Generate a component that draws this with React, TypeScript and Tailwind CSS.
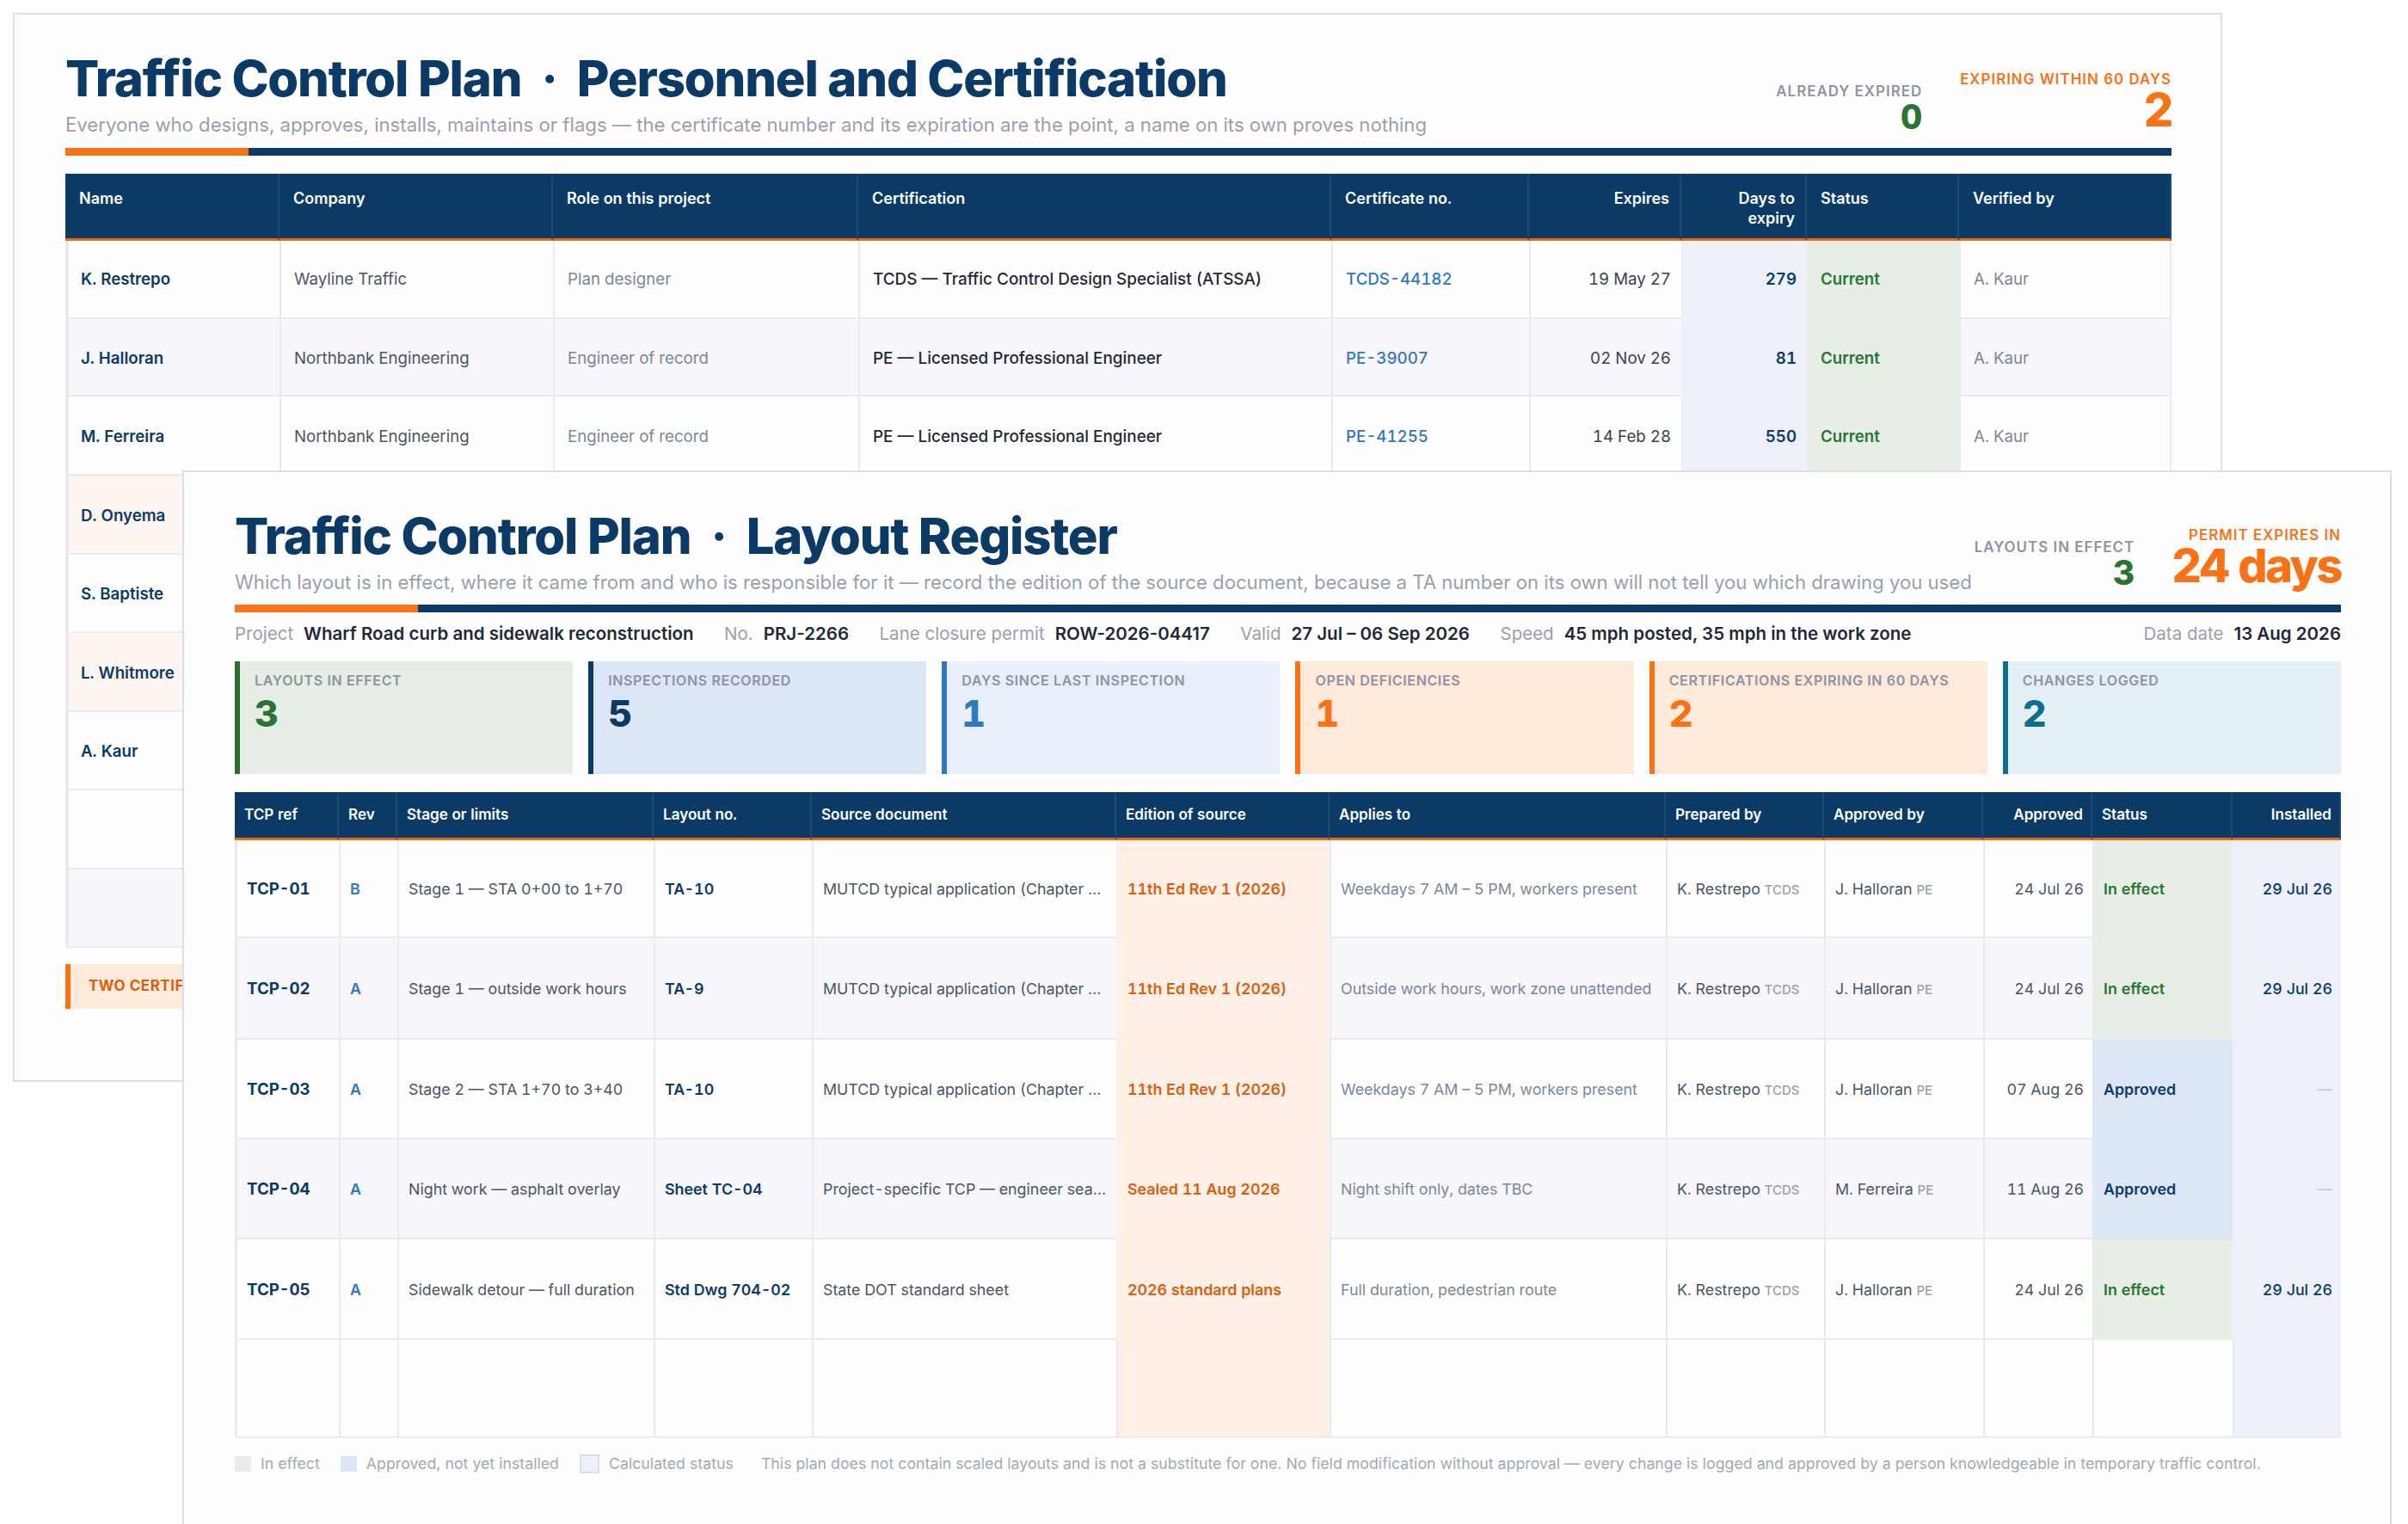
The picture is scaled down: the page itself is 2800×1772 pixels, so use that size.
import React from 'react';

const NAVY = 'text-[#0c3a66]';

const backCols = ['w-[249px]', 'w-[318px]', 'w-[355px]', 'w-[550px]', 'w-[230px]', 'w-[177px]', 'w-[146px]', 'w-[177px]', 'w-[247px]'];
const backHeads = ['Name', 'Company', 'Role on this project', 'Certification', 'Certificate no.', 'Expires', 'Days to expiry', 'Status', 'Verified by'];

const backRows = [
  { h: 'h-[91px]', bg: 'bg-[#fefefe]', name: 'K. Restrepo', company: 'Wayline Traffic', role: 'Plan designer', cert: 'TCDS — Traffic Control Design Specialist (ATSSA)', no: 'TCDS-44182', exp: '19 May 27', days: '279' },
  { h: 'h-[90px]', bg: 'bg-[#f7f6fa]', name: 'J. Halloran', company: 'Northbank Engineering', role: 'Engineer of record', cert: 'PE — Licensed Professional Engineer', no: 'PE-39007', exp: '02 Nov 26', days: '81' },
  { h: 'h-[92px]', bg: 'bg-[#fefefe]', name: 'M. Ferreira', company: 'Northbank Engineering', role: 'Engineer of record', cert: 'PE — Licensed Professional Engineer', no: 'PE-41255', exp: '14 Feb 28', days: '550' },
  { h: 'h-[92px]', bg: 'bg-[#fdf5f0]', name: 'D. Onyema' },
  { h: 'h-[91px]', bg: 'bg-[#fefefe]', name: 'S. Baptiste' },
  { h: 'h-[92px]', bg: 'bg-[#fdf5f0]', name: 'L. Whitmore' },
  { h: 'h-[91px]', bg: 'bg-[#fefefe]', name: 'A. Kaur' },
  { h: 'h-[92px]', bg: 'bg-[#fefefe]', name: '' },
  { h: 'h-[91px]', bg: 'bg-[#f7f6fa]', name: '' },
];

const frontCols = ['w-[121px]', 'w-[68px]', 'w-[298px]', 'w-[184px]', 'w-[354px]', 'w-[248px]', 'w-[391px]', 'w-[184px]', 'w-[185px]', 'w-[127px]', 'w-[163px]', 'w-[126px]'];
const frontHeads = ['TCP ref', 'Rev', 'Stage or limits', 'Layout no.', 'Source document', 'Edition of source', 'Applies to', 'Prepared by', 'Approved by', 'Approved', 'Status', 'Installed'];

const MUTCD = 'MUTCD typical application (Chapter 6P, Table 6P-1)';

const frontRows = [
  { h: 'h-[114px]', bg: 'bg-[#fefefe]', ref: 'TCP-01', rev: 'B', stage: 'Stage 1 — STA 0+00 to 1+70', layout: 'TA-10', source: MUTCD, edition: '11th Ed Rev 1 (2026)', applies: 'Weekdays 7 AM – 5 PM, workers present', by: 'J. Halloran', date: '24 Jul 26', status: 'In effect', installed: '29 Jul 26' },
  { h: 'h-[118px]', bg: 'bg-[#f7f6fa]', ref: 'TCP-02', rev: 'A', stage: 'Stage 1 — outside work hours', layout: 'TA-9', source: MUTCD, edition: '11th Ed Rev 1 (2026)', applies: 'Outside work hours, work zone unattended', by: 'J. Halloran', date: '24 Jul 26', status: 'In effect', installed: '29 Jul 26' },
  { h: 'h-[116px]', bg: 'bg-[#fefefe]', ref: 'TCP-03', rev: 'A', stage: 'Stage 2 — STA 1+70 to 3+40', layout: 'TA-10', source: MUTCD, edition: '11th Ed Rev 1 (2026)', applies: 'Weekdays 7 AM – 5 PM, workers present', by: 'J. Halloran', date: '07 Aug 26', status: 'Approved', installed: '—' },
  { h: 'h-[116px]', bg: 'bg-[#f7f6fa]', ref: 'TCP-04', rev: 'A', stage: 'Night work — asphalt overlay', layout: 'Sheet TC-04', source: 'Project-specific TCP — engineer sealed drawing set', edition: 'Sealed 11 Aug 2026', applies: 'Night shift only, dates TBC', by: 'M. Ferreira', date: '11 Aug 26', status: 'Approved', installed: '—' },
  { h: 'h-[117px]', bg: 'bg-[#fefefe]', ref: 'TCP-05', rev: 'A', stage: 'Sidewalk detour — full duration', layout: 'Std Dwg 704-02', source: 'State DOT standard sheet', edition: '2026 standard plans', applies: 'Full duration, pedestrian route', by: 'J. Halloran', date: '24 Jul 26', status: 'In effect', installed: '29 Jul 26' },
];

const kpis = [
  { label: 'Layouts in effect', value: '3', box: 'bg-[#e6eee6] border-[#2a6f31]', text: 'text-[#2a7434]' },
  { label: 'Inspections recorded', value: '5', box: 'bg-[#dde6f6] border-[#0c3a66]', text: 'text-[#0c3a66]' },
  { label: 'Days since last inspection', value: '1', box: 'bg-[#e9effa] border-[#2f78c4]', text: 'text-[#2f78c4]' },
  { label: 'Open deficiencies', value: '1', box: 'bg-[#fee9da] border-[#f97316]', text: 'text-[#f97316]' },
  { label: 'Certifications expiring in 60 days', value: '2', box: 'bg-[#fee9da] border-[#f97316]', text: 'text-[#f97316]' },
  { label: 'Changes logged', value: '2', box: 'bg-[#e3eef5] border-[#0e6f8c]', text: 'text-[#0e6f8c]' },
];

const meta = [
  ['Project', 'Wharf Road curb and sidewalk reconstruction'],
  ['No.', 'PRJ-2266'],
  ['Lane closure permit', 'ROW-2026-04417'],
  ['Valid', '27 Jul – 06 Sep 2026'],
  ['Speed', '45 mph posted, 35 mph in the work zone'],
];

function Title({ section }: { section: string }) {
  return (
    <h1 className={`text-[58px] leading-none font-extrabold tracking-[-0.02em] whitespace-nowrap ${NAVY}`}>
      Traffic Control Plan
      <span className="mx-[23px] font-bold">·</span>
      {section}
    </h1>
  );
}

function Stat({ label, value, big, tone }: { label: string; value: string; big?: boolean; tone: 'orange' | 'green' }) {
  return (
    <div className="flex flex-col items-end whitespace-nowrap">
      <div className={`text-[16.9px] leading-[14px] font-semibold uppercase tracking-[0.06em] ${tone === 'orange' ? 'text-[#f97316] mb-[2px]' : 'text-[#8d93a3] mb-[3px]'}`}>
        {label}
      </div>
      <div className={`leading-none font-extrabold tabular-nums ${big ? 'text-[54px] tracking-[-0.045em]' : 'text-[39px]'} ${tone === 'orange' ? 'text-[#f97316]' : 'text-[#2a7434]'}`}>
        {value}
      </div>
    </div>
  );
}

function AccentBar() {
  return (
    <div className="flex h-[9px]">
      <div className="w-[213px] bg-[#f97316]" />
      <div className="flex-1 bg-[#0c3a66]" />
    </div>
  );
}

function Swatch({ className }: { className: string }) {
  return <span className={`inline-block shrink-0 ${className}`} />;
}

function BackSheet() {
  return (
    <section className="absolute left-[15px] top-[15px] w-[2569px] h-[1243px] border-2 border-[#dcdde6] bg-[#fefefe] pl-[59px] pr-[57px] pt-[45px]">
      <header className="flex items-end justify-between mb-[13px]">
        <div className="min-w-0 flex-1">
          <Title section="Personnel and Certification" />
          <p className="mt-[11px] text-[22.15px] leading-[28px] text-[#9a9fae] whitespace-nowrap">
            Everyone who designs, approves, installs, maintains or flags — the certificate number and its expiration are the point, a name on its own proves nothing
          </p>
        </div>
        <div className="flex shrink-0 items-end gap-11 pb-1">
          <Stat label="Already expired" value="0" tone="green" />
          <Stat label="Expiring within 60 days" value="2" big tone="orange" />
        </div>
      </header>
      <AccentBar />
      <table className="mt-[21px] w-full table-fixed border-separate border-spacing-0 text-[18.7px] tabular-nums">
        <colgroup>
          {backCols.map((c, i) => (
            <col key={i} className={c} />
          ))}
        </colgroup>
        <thead>
          <tr className="h-[78px]">
            {backHeads.map((h, i) => (
              <th
                key={h}
                className={`bg-[#0c3a66] border-b-[3px] border-b-[#ea6a12] border-r-2 border-r-[#1d4a75] pt-[17px] align-top text-[18px] font-semibold leading-[23px] text-white ${i === 5 || i === 6 ? 'pr-[12px] text-right' : 'pr-4 text-left'} ${i === 6 ? 'pl-[40px]' : 'pl-4'}`}
              >
                {h}
              </th>
            ))}
          </tr>
        </thead>
        <tbody>
          {backRows.map((r, i) => {
            const pad = i > 0 ? 'pt-[4px]' : 'pt-[2px]';
            const cell = `border-l-2 border-b-2 border-[#e9e9ef] px-[15px] align-middle ${pad}`;
            return (
              <tr key={i} className={r.h}>
                <td className={`${r.bg} border-l-4 border-b-2 border-[#e9e9ef] px-[14px] align-middle font-semibold ${pad} ${NAVY}`}>{r.name}</td>
                <td className={`${r.bg} ${cell} text-[#4b5563]`}>{r.company}</td>
                <td className={`${r.bg} ${cell} text-[#7b8798]`}>{r.role}</td>
                <td className={`${r.bg} ${cell} text-[18.9px] font-medium text-[#1f2937]`}>{r.cert}</td>
                <td className={`${r.bg} ${cell} font-medium text-[#2f78c4]`}>{r.no}</td>
                <td className={`${r.bg} border-l-2 border-b-2 border-[#e9e9ef] pl-[15px] pr-[12px] text-right align-middle ${pad} text-[#374151]`}>{r.exp}</td>
                <td className={`bg-[#edf0f8] border-l-2 border-b-2 border-[#edf0f8] pl-[15px] pr-[12px] text-right align-middle font-semibold ${pad} ${NAVY}`}>{r.days}</td>
                <td className={`bg-[#e6eee6] border-l-2 border-b-2 border-[#e6eee6] px-[14px] align-middle font-semibold ${pad} text-[#2a7434]`}>{r.no ? 'Current' : ''}</td>
                <td className={`${r.bg} border-r-2 ${cell} text-[#7b8798]`}>{r.no ? 'A. Kaur' : ''}</td>
              </tr>
            );
          })}
        </tbody>
      </table>
      <div className="mt-[19px] flex h-[52px] items-center border-l-[6px] border-[#f97316] bg-[#fee9da] pl-[21px] text-[17px] font-bold uppercase tracking-[0.03em] whitespace-nowrap text-[#d95f0e]">
        Two certifications expire
      </div>
    </section>
  );
}

function FrontSheet() {
  return (
    <section className="absolute left-[212px] top-[547px] w-[2569px] h-[1300px] border-2 border-[#dcdde6] bg-[#fefefe] pl-[59px] pr-[57px] pt-[45px]">
      <header className="flex items-end justify-between mb-[12px]">
        <div className="min-w-0 flex-1">
          <Title section="Layout Register" />
          <p className="mt-[11px] text-[22.15px] leading-[28px] text-[#9a9fae] whitespace-nowrap">
            Which layout is in effect, where it came from and who is responsible for it — record the edition of the source document, because a TA number on its own will not tell you which drawing you used
          </p>
        </div>
        <div className="flex shrink-0 items-end gap-[43px] pb-[6px]">
          <Stat label="Layouts in effect" value="3" tone="green" />
          <Stat label="Permit expires in" value="24 days" big tone="orange" />
        </div>
      </header>
      <AccentBar />
      <div className="mt-[11px] flex h-[28px] items-center gap-[35.5px] text-[20.5px] leading-[28px] whitespace-nowrap">
        {meta.map(([k, v]) => (
          <span key={k} className="flex gap-3">
            <span className="text-[#9a9fae]">{k}</span>
            <span className="font-semibold text-[#1f2937]">{v}</span>
          </span>
        ))}
        <span className="ml-auto flex gap-3">
          <span className="text-[#9a9fae]">Data date</span>
          <span className="font-semibold text-[#1f2937]">13 Aug 2026</span>
        </span>
      </div>
      <div className="mt-[18px] grid grid-cols-6 gap-[18px]">
        {kpis.map((k) => (
          <div key={k.label} className={`h-[131px] border-l-[6px] pl-[17px] pt-[12px] ${k.box}`}>
            <div className="text-[16px] leading-[20px] font-semibold uppercase tracking-[0.04em] text-[#8d93a3] whitespace-nowrap">{k.label}</div>
            <div className={`mt-[7px] text-[43px] leading-none font-extrabold tabular-nums ${k.text}`}>{k.value}</div>
          </div>
        ))}
      </div>
      <table className="mt-[21px] w-full table-fixed border-separate border-spacing-0 text-[17.83px] tabular-nums">
        <colgroup>
          {frontCols.map((c, i) => (
            <col key={i} className={c} />
          ))}
        </colgroup>
        <thead>
          <tr className="h-[56px]">
            {frontHeads.map((h, i) => (
              <th
                key={h}
                className={`bg-[#0c3a66] border-b-[3px] border-b-[#ea6a12] border-r-2 border-r-[#1d4a75] pb-[2px] align-middle text-[17.1px] font-semibold text-white ${i === 9 || i === 11 ? 'pl-[11px] pr-[9px] text-right' : 'px-[11px] text-left'}`}
              >
                {h}
              </th>
            ))}
          </tr>
        </thead>
        <tbody>
          {frontRows.map((r) => {
            const cell = 'border-l-2 border-b-2 border-[#e9e9ef] px-[11px] pt-[3px] align-middle';
            const inEffect = r.status === 'In effect';
            return (
              <tr key={r.ref} className={r.h}>
                <td className={`${r.bg} border-l-[3px] border-b-2 border-[#e9e9ef] px-[11px] pt-[3px] align-middle text-[18.7px] font-bold ${NAVY}`}>{r.ref}</td>
                <td className={`${r.bg} ${cell} font-semibold text-[#2f78c4]`}>{r.rev}</td>
                <td className={`${r.bg} ${cell} whitespace-nowrap text-[#4b5563]`}>{r.stage}</td>
                <td className={`${r.bg} ${cell} whitespace-nowrap font-semibold ${NAVY}`}>{r.layout}</td>
                <td className={`${r.bg} ${cell} truncate text-[#4b5563]`}>{r.source}</td>
                <td className="bg-[#fef0e6] border-l-2 border-b-2 border-[#fef0e6] px-[11px] pt-[3px] align-middle whitespace-nowrap font-semibold text-[#d95f0e]">{r.edition}</td>
                <td className={`${r.bg} ${cell} whitespace-nowrap text-[#7b8798]`}>{r.applies}</td>
                <td className={`${r.bg} ${cell} text-[#4b5563] whitespace-nowrap`}>
                  K. Restrepo <span className="text-[15px] font-medium text-[#9a9fae]">TCDS</span>
                </td>
                <td className={`${r.bg} ${cell} text-[#4b5563] whitespace-nowrap`}>
                  {r.by} <span className="text-[15px] font-medium text-[#9a9fae]">PE</span>
                </td>
                <td className={`${r.bg} ${cell} pr-[10px] text-right text-[#4b5563]`}>{r.date}</td>
                <td className={`border-l-2 border-b-2 px-[11px] pt-[3px] align-middle font-semibold ${inEffect ? 'bg-[#e6eee6] border-[#e6eee6] text-[#2a7434]' : 'bg-[#dde6f6] border-[#dde6f6] text-[#0c3a66]'}`}>{r.status}</td>
                <td className={`bg-[#edf0f8] border-l-2 border-b-2 border-[#edf0f8] pl-[11px] pr-[10px] pt-[3px] text-right align-middle ${r.installed === '—' ? 'text-[#c3c7d0]' : `font-medium ${NAVY}`}`}>{r.installed}</td>
              </tr>
            );
          })}
          <tr className="h-[114px]">
            {frontHeads.map((h, i) => (
              <td
                key={h}
                className={`border-l-2 border-b-2 ${i === 5 ? 'bg-[#fef0e6] border-[#f0e9e6]' : i === 11 ? 'bg-[#edf0f8] border-[#e9e9ef]' : 'bg-[#fefefe] border-[#e9e9ef]'} ${i === 0 ? 'border-l-[3px]' : ''}`}
              />
            ))}
          </tr>
        </tbody>
      </table>
      <footer className="mt-[19px] flex h-[22px] items-center text-[17.75px] text-[#a3a8b5] whitespace-nowrap">
        <Swatch className="h-[18px] w-[19px] bg-[#e6eee6]" />
        <span className="ml-[11px]">In effect</span>
        <Swatch className="ml-[24px] h-[18px] w-[19px] bg-[#dde6f6]" />
        <span className="ml-[11px]">Approved, not yet installed</span>
        <Swatch className="ml-[24px] h-[22px] w-[23px] border-2 border-[#dcdde6] bg-[#edf0f8]" />
        <span className="ml-[11px]">Calculated status</span>
        <span className="ml-[32px]">
          This plan does not contain scaled layouts and is not a substitute for one. No field modification without approval — every change is logged and approved by a person knowledgeable in temporary traffic control.
        </span>
      </footer>
    </section>
  );
}

export default function App() {
  return (
    <div className="relative h-[1772px] w-[2800px] overflow-hidden bg-white font-['Inter',sans-serif]">
      <BackSheet />
      <FrontSheet />
    </div>
  );
}
